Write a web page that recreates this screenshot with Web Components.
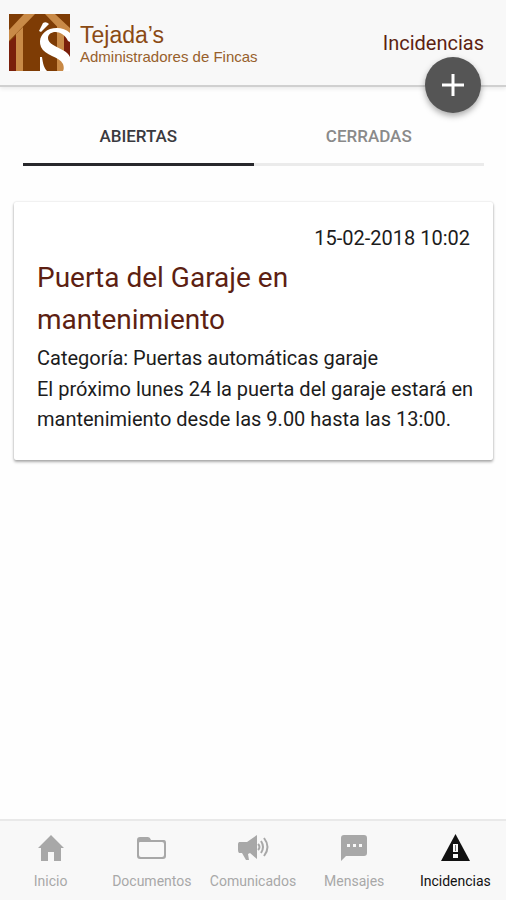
<!DOCTYPE html>
<html lang="es">
<head>
<meta charset="utf-8">
<meta name="viewport" content="width=device-width, initial-scale=1">
<title>Incidencias</title>
<style>
  html, body { height: 100%; margin: 0; }
  body { background: #fefefe; font-family: Roboto, "Liberation Sans", sans-serif; color: #1c1c1c; }
</style>
</head>
<body>
<incidents-app></incidents-app>
<script>
const define = (name, html, setup) => customElements.define(name, class extends HTMLElement {
  connectedCallback() {
    if (this.shadowRoot) return;
    const template = document.createElement('template');
    template.innerHTML = html;
    this.attachShadow({ mode: 'open' }).append(template.content.cloneNode(true));
    if (setup) setup(this, this.shadowRoot);
  }
});

define('brand-logo', `
<style>
  :host { display: flex; align-items: center; gap: 9px; }
  svg { display: block; width: 62px; height: 57px; flex: none; }
  .text { display: flex; flex-direction: column; padding-top: 5px; font-family: "Liberation Sans", sans-serif; color: #8a4a14; }
  .name { font-size: 23px; line-height: 23px; }
  .sub { font-size: 15px; line-height: 20px; color: #97602c; }
</style>
<svg viewBox="0 0 62 57" aria-hidden="true">
  <rect width="61" height="57" fill="#7e3c05"/>
  <path d="M0 28L7 22V57H0ZM55 22L61 28V57H55Z" fill="#7a1f0b"/>
  <path d="M15 0H26L0 27V16ZM7 20L14 13V57H7ZM36 0H46L61 14V26ZM48 12L55 20V57H48Z" fill="#c98a47"/>
  <path d="M30 17L34 9Q37 7 40 10L32 18Z" fill="#fff"/>
  <path d="M61 19C56 14 48 13 41 15C33 18 29 25 32 33C36 42 50 42 54 50C55 53 55 55 54 57H61V43C58 34 39 33 39 24C39 16 54 15 59 27L61 28Z" fill="#fff"/>
  <path d="M31 43H33C34 50 35 54 38 57H31Z" fill="#fff"/>
</svg>
<div class="text"><span class="name">Tejada’s</span><span class="sub">Administradores de Fincas</span></div>`);

define('fab-button', `
<style>
  :host { display: block; }
  button { display: grid; place-items: center; width: 56px; height: 56px; padding: 0; border: 0; border-radius: 50%;
    background: #555; box-shadow: 0 3px 6px rgba(0,0,0,.34); cursor: pointer; }
  svg { width: 22px; height: 22px; }
</style>
<button type="button" aria-label="Añadir incidencia"><svg viewBox="0 0 22 22"><path d="M11 0V22M0 11H22" stroke="#fff" stroke-width="3"/></svg></button>`);

define('page-header', `
<style>
  :host { position: relative; display: block; background: #f8f8f8; border-bottom: 2px solid #d0d0d0; box-shadow: 0 2px 4px rgba(0,0,0,.08); }
  header { display: flex; align-items: center; justify-content: space-between; height: 85px; padding: 0 22px 0 9px; }
  h1 { margin: 0; font-size: 20px; line-height: 24px; font-weight: 400; color: #5d1f12; }
  fab-button { position: absolute; right: 25px; bottom: -28px; z-index: 1; }
</style>
<header><brand-logo></brand-logo><h1><slot></slot></h1></header>
<fab-button></fab-button>`);

define('segment-tabs', `
<style>
  :host { display: block; padding: 22px 22px 0 23px; }
  div { display: flex; }
  button { flex: 1; height: 57px; padding: 0; border: 0; border-bottom: 3px solid #ebebeb; background: none;
    font: 500 17px/24px Roboto, sans-serif; color: #8a8a8a; cursor: pointer; }
  button[aria-selected=true] { color: #3a3a40; border-color: #28282c; }
</style>
<div role="tablist">
  <button type="button" role="tab" aria-selected="true">ABIERTAS</button>
  <button type="button" role="tab" aria-selected="false">CERRADAS</button>
</div>`);

define('incident-card', `
<style>
  :host { display: block; margin: 36px 13px 0 14px; padding: 22px 15px 26px 23px; background: #fff; border-radius: 2px;
    box-shadow: 0 2px 3px rgba(0,0,0,.32), 0 0 2px rgba(0,0,0,.16); }
  time { display: block; padding-right: 8px; text-align: right; font-size: 20px; line-height: 28px; }
  h2 { margin: 5px 0 1px; font-size: 28px; line-height: 42px; font-weight: 400; color: #5d1f12; }
  p { margin: 0; font-size: 20px; line-height: 30px; }
  .category { line-height: 32px; }
</style>
<article>
  <time><slot name="date"></slot></time>
  <h2><slot name="title"></slot></h2>
  <p class="category">Categoría: <slot name="category"></slot></p>
  <p><slot></slot></p>
</article>`);

const icons = {
  home: '<path d="M14 1L27 14H24V27H17V18H11V27H4V14H1Z" fill="currentColor"/>',
  folder: '<path d="M1 5Q1 2 4 2H12Q14 2 15 5H28Q30 5 30 8V21Q30 24 27 24H4Q1 24 1 21ZM3 8V20Q3 22 5 22H26Q28 22 28 20V9Q28 7 26 7H4Q3 7 3 8Z" fill="currentColor" fill-rule="evenodd"/>',
  horn: '<path d="M1 7H9L19 0V24L12 18L10 19L11 25H8L4 18H1Q0 17 0 15V9Q0 8 1 7Z" fill="currentColor"/><path d="M20 9Q23 12 20 15M23 6Q27 12 23 18M26 3Q33 12 26 21" fill="none" stroke="currentColor" stroke-width="2"/>',
  chat: '<path d="M1 3Q1 0 4 0H24Q27 0 27 3V18Q27 21 24 21H6L1 26Z" fill="currentColor"/><path d="M7 9h3v3h-3zM13 9h3v3h-3zM19 9h3v3h-3z" fill="#f8f8f8"/>',
  alert: '<path d="M14.5 0L29 27H0Z" fill="currentColor"/><path d="M12 10h5v8h-5zM12 20h5v4h-5z" fill="#f8f8f8"/><path d="M14 11h1v6h-1z" fill="#777"/>'
};
const boxes = { home: [28, 28], folder: [31, 26], horn: [31, 26], chat: [28, 26], alert: [29, 28] };

define('nav-item', `
<style>
  :host { flex: 1 1 0; min-width: 0; color: #a8a8a8; }
  :host([current]) { color: #111; }
  a { display: flex; flex-direction: column; align-items: center; gap: 8px; padding-top: 12px; color: inherit; text-decoration: none; }
  .icon { display: grid; place-items: center; height: 30px; }
  svg { display: block; }
  .label { font-size: 14px; line-height: 20px; white-space: nowrap; }
</style>
<a href="#"><span class="icon"></span><span class="label"><slot></slot></span></a>`, (host, root) => {
  const name = host.getAttribute('icon');
  const [w, h] = boxes[name];
  root.querySelector('.icon').innerHTML = `<svg width="${w}" height="${h}" viewBox="0 0 ${w} ${h}" aria-hidden="true">${icons[name]}</svg>`;
  if (host.hasAttribute('current')) root.querySelector('a').setAttribute('aria-current', 'page');
});

define('bottom-nav', `
<style>
  :host { display: block; background: #f8f8f8; border-top: 2px solid #e9e9e9; }
  nav { display: flex; padding-bottom: 9px; }
</style>
<nav aria-label="Principal"><slot></slot></nav>`);

define('incidents-app', `
<style>
  :host { display: flex; flex-direction: column; min-height: 100%; }
  main { flex: 1; }
  bottom-nav { position: sticky; bottom: 0; }
</style>
<page-header>Incidencias</page-header>
<main>
  <segment-tabs></segment-tabs>
  <incident-card>
    <span slot="date">15-02-2018 10:02</span>
    <span slot="title">Puerta del Garaje en mantenimiento</span>
    <span slot="category">Puertas automáticas garaje</span>
    El próximo lunes 24 la puerta del garaje estará en mantenimiento desde las 9.00 hasta las 13:00.
  </incident-card>
</main>
<bottom-nav>
  <nav-item icon="home">Inicio</nav-item>
  <nav-item icon="folder">Documentos</nav-item>
  <nav-item icon="horn">Comunicados</nav-item>
  <nav-item icon="chat">Mensajes</nav-item>
  <nav-item icon="alert" current>Incidencias</nav-item>
</bottom-nav>`);
</script>
</body>
</html>
